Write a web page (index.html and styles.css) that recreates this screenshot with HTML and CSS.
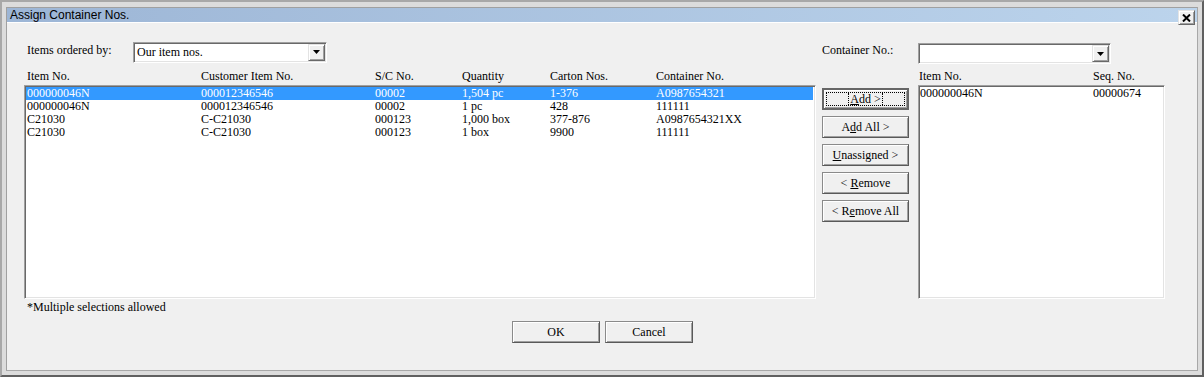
FILE: index.html
```html
<!DOCTYPE html>
<html lang="en">
<head>
    <meta charset="UTF-8">
    <title>Assign Container Nos.</title>
    <link rel="stylesheet" href="styles.css">
</head>
<body>
    <div class="window">
        <div class="frame">
            <div class="titlebar">
                <span class="title">Assign Container Nos.</span>
                <button class="close-btn" title="Close">
                    <svg width="9" height="8" viewBox="0 0 9 8"><path d="M1 0.5 L8 7.5 M8 0.5 L1 7.5" stroke="#000" stroke-width="2"/></svg>
                </button>
            </div>

            <div class="client">
                <div class="panel">
                    <div class="order-by">
                        <span class="order-label">Items ordered by:</span>
                        <div class="combo combo-left">
                            <span class="combo-text">Our item nos.</span>
                            <span class="drop-btn"><svg width="7" height="4" viewBox="0 0 7 4"><polygon points="0,0 7,0 3.5,4" fill="#000"/></svg></span>
                        </div>
                    </div>
                    <div class="container-label">Container No.:</div>
                    <div class="container-pick">
                        <div class="combo combo-right">
                            <span class="combo-text"></span>
                            <span class="drop-btn"><svg width="7" height="4" viewBox="0 0 7 4"><polygon points="0,0 7,0 3.5,4" fill="#000"/></svg></span>
                        </div>
                    </div>

                    <div class="cols left-cols headers">
                        <span>Item No.</span>
                        <span>Customer Item No.</span>
                        <span>S/C No.</span>
                        <span>Quantity</span>
                        <span>Carton Nos.</span>
                        <span>Container No.</span>
                    </div>
                    <div></div>
                    <div class="cols right-cols headers right-headers">
                        <span>Item No.</span>
                        <span>Seq. No.</span>
                    </div>

                    <div class="listbox left-list" id="itemList">
                        <!-- rows come from the script below -->
                    </div>

                    <div class="btn-stack">
                        <button class="btn default-btn"><span class="focus-rect"><span class="focus-label"><u>A</u>dd &gt;</span></span></button>
                        <button class="btn">A<u>d</u>d All &gt;</button>
                        <button class="btn"><u>U</u>nassigned &gt;</button>
                        <button class="btn">&lt; <u>R</u>emove</button>
                        <button class="btn">&lt; R<u>e</u>move All</button>
                    </div>

                    <div class="listbox right-list">
                        <div class="cols right-cols row">
                            <span>000000046N</span>
                            <span>00000674</span>
                        </div>
                    </div>
                </div>

                <div class="note">*Multiple selections allowed</div>

                <div class="actions">
                    <button class="btn action-btn">OK</button>
                    <button class="btn action-btn">Cancel</button>
                </div>
            </div>
        </div>
    </div>

    <script>
        const items = [
            ['000000046N', '000012346546', '00002', '1,504 pc', '1-376', 'A0987654321'],
            ['000000046N', '000012346546', '00002', '1 pc', '428', '111111'],
            ['C21030', 'C-C21030', '000123', '1,000 box', '377-876', 'A0987654321XX'],
            ['C21030', 'C-C21030', '000123', '1 box', '9900', '111111']
        ];

        const itemList = document.getElementById('itemList');

        items.forEach((item, i) => {
            const row = document.createElement('div');
            row.className = 'cols left-cols row' + (i === 0 ? ' selected' : '');
            row.innerHTML = item.map(cell => `<span>${cell}</span>`).join('');
            itemList.appendChild(row);
        });
    </script>
</body>
</html>
```

FILE: styles.css
```css
body {
    margin: 0;
    padding: 0;
    font-family: "Liberation Serif", "Times New Roman", serif;
    font-size: 12px;
    color: #000;
    background: #ffffff;
}

button {
    font-family: "Liberation Serif", "Times New Roman", serif;
    font-size: 12px;
    color: #000;
    padding: 0;
    margin: 0;
}

.window {
    width: 1204px;
    height: 377px;
    box-sizing: border-box;
    border: 2px solid;
    border-color: #a8a8a8 #606060 #606060 #a8a8a8;
    padding: 5px 4px 4px 4px;
    background: #dcdcdc;
}

.frame {
    height: 100%;
    box-sizing: border-box;
    border: 1px solid;
    border-color: #a0a0a0 #a8a8a8 #a8a8a8 #a0a0a0;
    display: flex;
    flex-direction: column;
}

.titlebar {
    height: 14px;
    flex: none;
    display: flex;
    align-items: flex-start;
    justify-content: space-between;
    padding-left: 3px;
    border-bottom: 1px solid #ffffff;
    background: linear-gradient(to right, #9db6d6, #bcd4ec);
}

.title {
    font-family: "Liberation Sans", Arial, sans-serif;
    font-size: 12px;
    line-height: 15px;
}

.close-btn {
    position: relative;
    z-index: 1;
    width: 17px;
    height: 15px;
    margin: 2px 2px 0 0;
    box-sizing: border-box;
    border: 1px solid;
    border-color: #e3e3e3 #696969 #696969 #e3e3e3;
    box-shadow: inset 1px 1px #ffffff, inset -1px -1px #a0a0a0;
    background: #f0f0f0;
    display: flex;
    align-items: center;
    justify-content: center;
}

.client {
    flex: 1;
    background: #f0f0f0;
    padding: 18px 16px 0 17px;
}

.panel {
    display: grid;
    grid-template-columns: 792px 93px 256px;
    grid-template-rows: 22px 22px 214px;
}

.order-by {
    display: flex;
    align-items: center;
    padding-left: 3px;
}

.order-label {
    width: 106px;
    line-height: 13px;
    margin-top: -3px;
}

.container-label {
    padding-left: 6px;
    margin-top: 3px;
    line-height: 13px;
}

.container-pick {
    padding-left: 9px;
    padding-top: 2px;
}

.combo {
    height: 21px;
    box-sizing: border-box;
    border: 1px solid;
    border-color: #a0a0a0 #ffffff #ffffff #a0a0a0;
    box-shadow: inset 1px 1px #696969, inset -1px -1px #e3e3e3;
    padding: 1px;
    display: flex;
    align-items: stretch;
}

.combo-left {
    width: 194px;
}

.combo-right {
    width: 193px;
}

.combo-text {
    flex: 1;
    background: #ffffff;
    padding-left: 2px;
    line-height: 17px;
}

.drop-btn {
    width: 17px;
    box-sizing: border-box;
    border: 1px solid;
    border-color: #e3e3e3 #696969 #696969 #e3e3e3;
    box-shadow: inset 1px 1px #ffffff, inset -1px -1px #a0a0a0;
    background: #f0f0f0;
    display: flex;
    align-items: center;
    justify-content: center;
}

.cols {
    display: grid;
    line-height: 13px;
    white-space: nowrap;
}

.left-cols {
    grid-template-columns: 174px 174px 87px 88px 106px 1fr;
}

.right-cols {
    grid-template-columns: 173px 1fr;
}

.headers {
    align-self: end;
    padding: 0 0 2px 3px;
}

.right-headers {
    margin-left: 9px;
    padding-left: 1px;
    grid-template-columns: 174px 1fr;
}

.listbox {
    background: #ffffff;
    box-sizing: border-box;
    border: 1px solid;
    border-color: #a0a0a0 #ffffff #ffffff #a0a0a0;
    box-shadow: inset 1px 1px #696969, inset -1px -1px #e3e3e3;
    padding: 1px;
}

.right-list {
    margin-left: 9px;
    width: 247px;
}

.row {
    height: 13px;
    padding-left: 1px;
}

.right-list .row {
    padding-left: 0;
}

.row.selected {
    background: #3399ff;
    color: #ffffff;
    margin-right: 1px;
}

.btn-stack {
    padding: 3px 0 0 6px;
    display: flex;
    flex-direction: column;
    gap: 6px;
}

.btn {
    width: 87px;
    height: 22px;
    box-sizing: border-box;
    border: 1px solid;
    border-color: #8a8a8a #595959 #595959 #8a8a8a;
    box-shadow: inset 1px 1px #ffffff, inset -1px -1px #a0a0a0;
    background: #f0f0f0;
    line-height: 18px;
    text-align: center;
}

.default-btn {
    border: 2px solid #666666;
    box-shadow: inset 1px 1px #ffffff, inset -1px -1px #a0a0a0;
    padding: 2px;
    display: flex;
}

.focus-rect {
    flex: 1;
    border: 1px dotted #000000;
    display: flex;
    justify-content: center;
    line-height: 12px;
}

.focus-label {
    border-left: 1px dotted #000000;
    border-right: 1px dotted #000000;
    padding: 0 1px;
}

.note {
    padding-left: 3px;
    margin-top: 2px;
    line-height: 13px;
}

.actions {
    display: flex;
    justify-content: center;
    gap: 5px;
    margin-top: 7px;
}

.action-btn {
    width: 88px;
}
```
